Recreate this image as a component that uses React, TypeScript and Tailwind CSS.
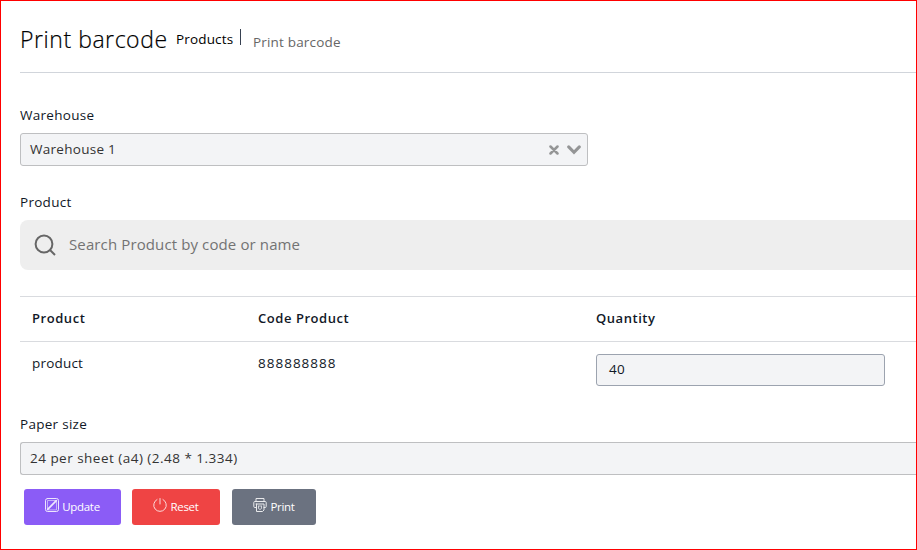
import type { ReactNode } from "react";

function Button({ className, icon, children }: { className: string; icon: ReactNode; children: ReactNode }) {
  return (
    <button className={`flex h-9 items-center justify-center rounded-[3px] text-[11.5px] font-medium tracking-[-0.3px] text-white ${className}`}>
      {icon}
      <span>{children}</span>
    </button>
  );
}

const stroke = { fill: "none", stroke: "currentColor", strokeLinecap: "round", strokeLinejoin: "round" } as const;

function UpdateIcon() {
  return (
    <svg viewBox="0 0 14 14" className="mr-[3px] -mt-1 size-3.5 opacity-85" {...stroke}>
      <rect x="0.5" y="0.5" width="13" height="13" rx="2" />
      <path d="M2.5 11.5V2.5H11.5V11.5Z" strokeWidth="0.6" />
      <path d="M2.7 11.3L11.3 2.7" strokeWidth="1.7" />
    </svg>
  );
}

function PowerIcon() {
  return (
    <svg viewBox="0 0 14 14" className="mr-[3px] -mt-1 size-3.5 opacity-80" {...stroke}>
      <path d="M7 0.5V6M4 1.5A6.3 6.3 0 1 0 10 1.5" />
    </svg>
  );
}

function PrintIcon() {
  return (
    <svg viewBox="0 0 14 14" className="mr-[3px] -mt-1 size-3.5 opacity-85" {...stroke}>
      <path d="M3 3.5V.5H11V3.5M3 9.5H1.8Q.8 9.5 .8 8.5V4.5Q.8 3.5 1.8 3.5H12.2Q13.2 3.5 13.2 4.5V8.5Q13.2 9.5 12.2 9.5H11M3 6H11V12L9.5 13.5H3.5V6" />
      <path d="M5.5 8V10.5L7 11.5L8.5 10.5V8M6 8H8" strokeWidth="0.8" />
    </svg>
  );
}

export default function App() {
  return (
    <main className="h-[550px] w-[917px] overflow-hidden border border-[#ff0000] bg-white pl-[19px] font-['Open_Sans','Noto_Sans',sans-serif] text-[13.5px] tracking-[0.28px] text-[#111827]">
      <header className="flex h-[72px] items-start border-b border-[#d1d5db]">
        <h1 className="mt-5 w-[155px] whitespace-nowrap text-[23px] leading-9 font-[340] tracking-[0.55px] text-black [-webkit-text-stroke:0.2px_black]">Print barcode</h1>
        <span className="mt-7 w-[65px] whitespace-nowrap pl-px leading-5 tracking-[0.16px] text-black">Products</span>
        <span className="mt-7 h-4 w-[13px] border-l border-[#374151]" />
        <span className="mt-[31px] whitespace-nowrap leading-5 tracking-[0.18px] text-[#666]">Print barcode</span>
      </header>

      <label className="mt-8 block leading-5">Warehouse</label>
      <div className="mt-2 flex h-[33px] w-[568px] items-center rounded-[3px] border border-[#bebfc1] bg-[#f3f4f6] pl-[9px] text-[#333]">
        <span className="flex-1">Warehouse 1</span>
        <svg viewBox="0 0 10 10" className="mr-2 size-[10px] text-[#949596]" fill="none" stroke="currentColor" strokeWidth="2.5" strokeLinecap="round">
          <path d="M1.5 1.5L8.5 8.5M8.5 1.5L1.5 8.5" />
        </svg>
        <svg viewBox="0 0 14 10" className="mr-[6px] h-[10px] w-3.5 text-[#949596]" fill="none" stroke="currentColor" strokeWidth="3" strokeLinecap="round">
          <path d="M1.7 1.9L7 7.4L12.3 1.9" />
        </svg>
      </div>

      <label className="mt-[26px] block leading-5">Product</label>
      <div className="mt-2 flex h-[50px] items-center rounded-l-lg bg-[#eee] pl-[14px] text-[15px] tracking-[0.12px] text-[#737373]">
        <svg viewBox="0 0 22 22" className="mr-[13px] size-[22px] text-[#666]" fill="none" stroke="currentColor" strokeWidth="2">
          <circle cx="10" cy="10" r="8.4" />
          <path d="M16 16L21 21" />
        </svg>
        <span className="-mt-0.5">Search Product by code or name</span>
      </div>

      <section className="mt-[26px]">
        <div className="grid h-[46px] grid-cols-[226px_338px_1fr] items-center border-y border-[#d9dbdf] pb-px text-[13px] font-semibold tracking-[0.55px]">
          <span className="pl-3">Product</span>
          <span className="pl-3">Code Product</span>
          <span className="pl-3">Quantity</span>
        </div>
        <div className="grid h-[72px] grid-cols-[226px_338px_1fr] pt-[11px]">
          <span className="pl-3 leading-5 tracking-[0.2px]">product</span>
          <span className="pl-3 leading-5 tracking-[1px]">888888888</span>
          <div className="mt-px ml-3 flex h-8 w-[289px] items-center rounded-[3px] border border-[#9ca3af] bg-[#f3f4f6] pb-0.5 pl-3">40</div>
        </div>
      </section>

      <label className="block leading-5">Paper size</label>
      <div className="mt-2 flex h-[33px] items-center rounded-l-[3px] border border-r-0 border-[#bebfc1] bg-[#f3f4f6] pl-[9px] tracking-[0.48px] text-[#333]">
        <span>24 per sheet (a4) (2.48 * 1.334)</span>
      </div>
      <div className="mt-[14px] flex pl-1">
        <Button className="w-[97px] bg-[#8b5cf6]" icon={<UpdateIcon />}>Update</Button>
        <Button className="ml-[11px] w-[88px] bg-[#ef4444]" icon={<PowerIcon />}>Reset</Button>
        <Button className="ml-3 w-[84px] bg-[#6b7280]" icon={<PrintIcon />}>Print</Button>
      </div>
    </main>
  );
}
